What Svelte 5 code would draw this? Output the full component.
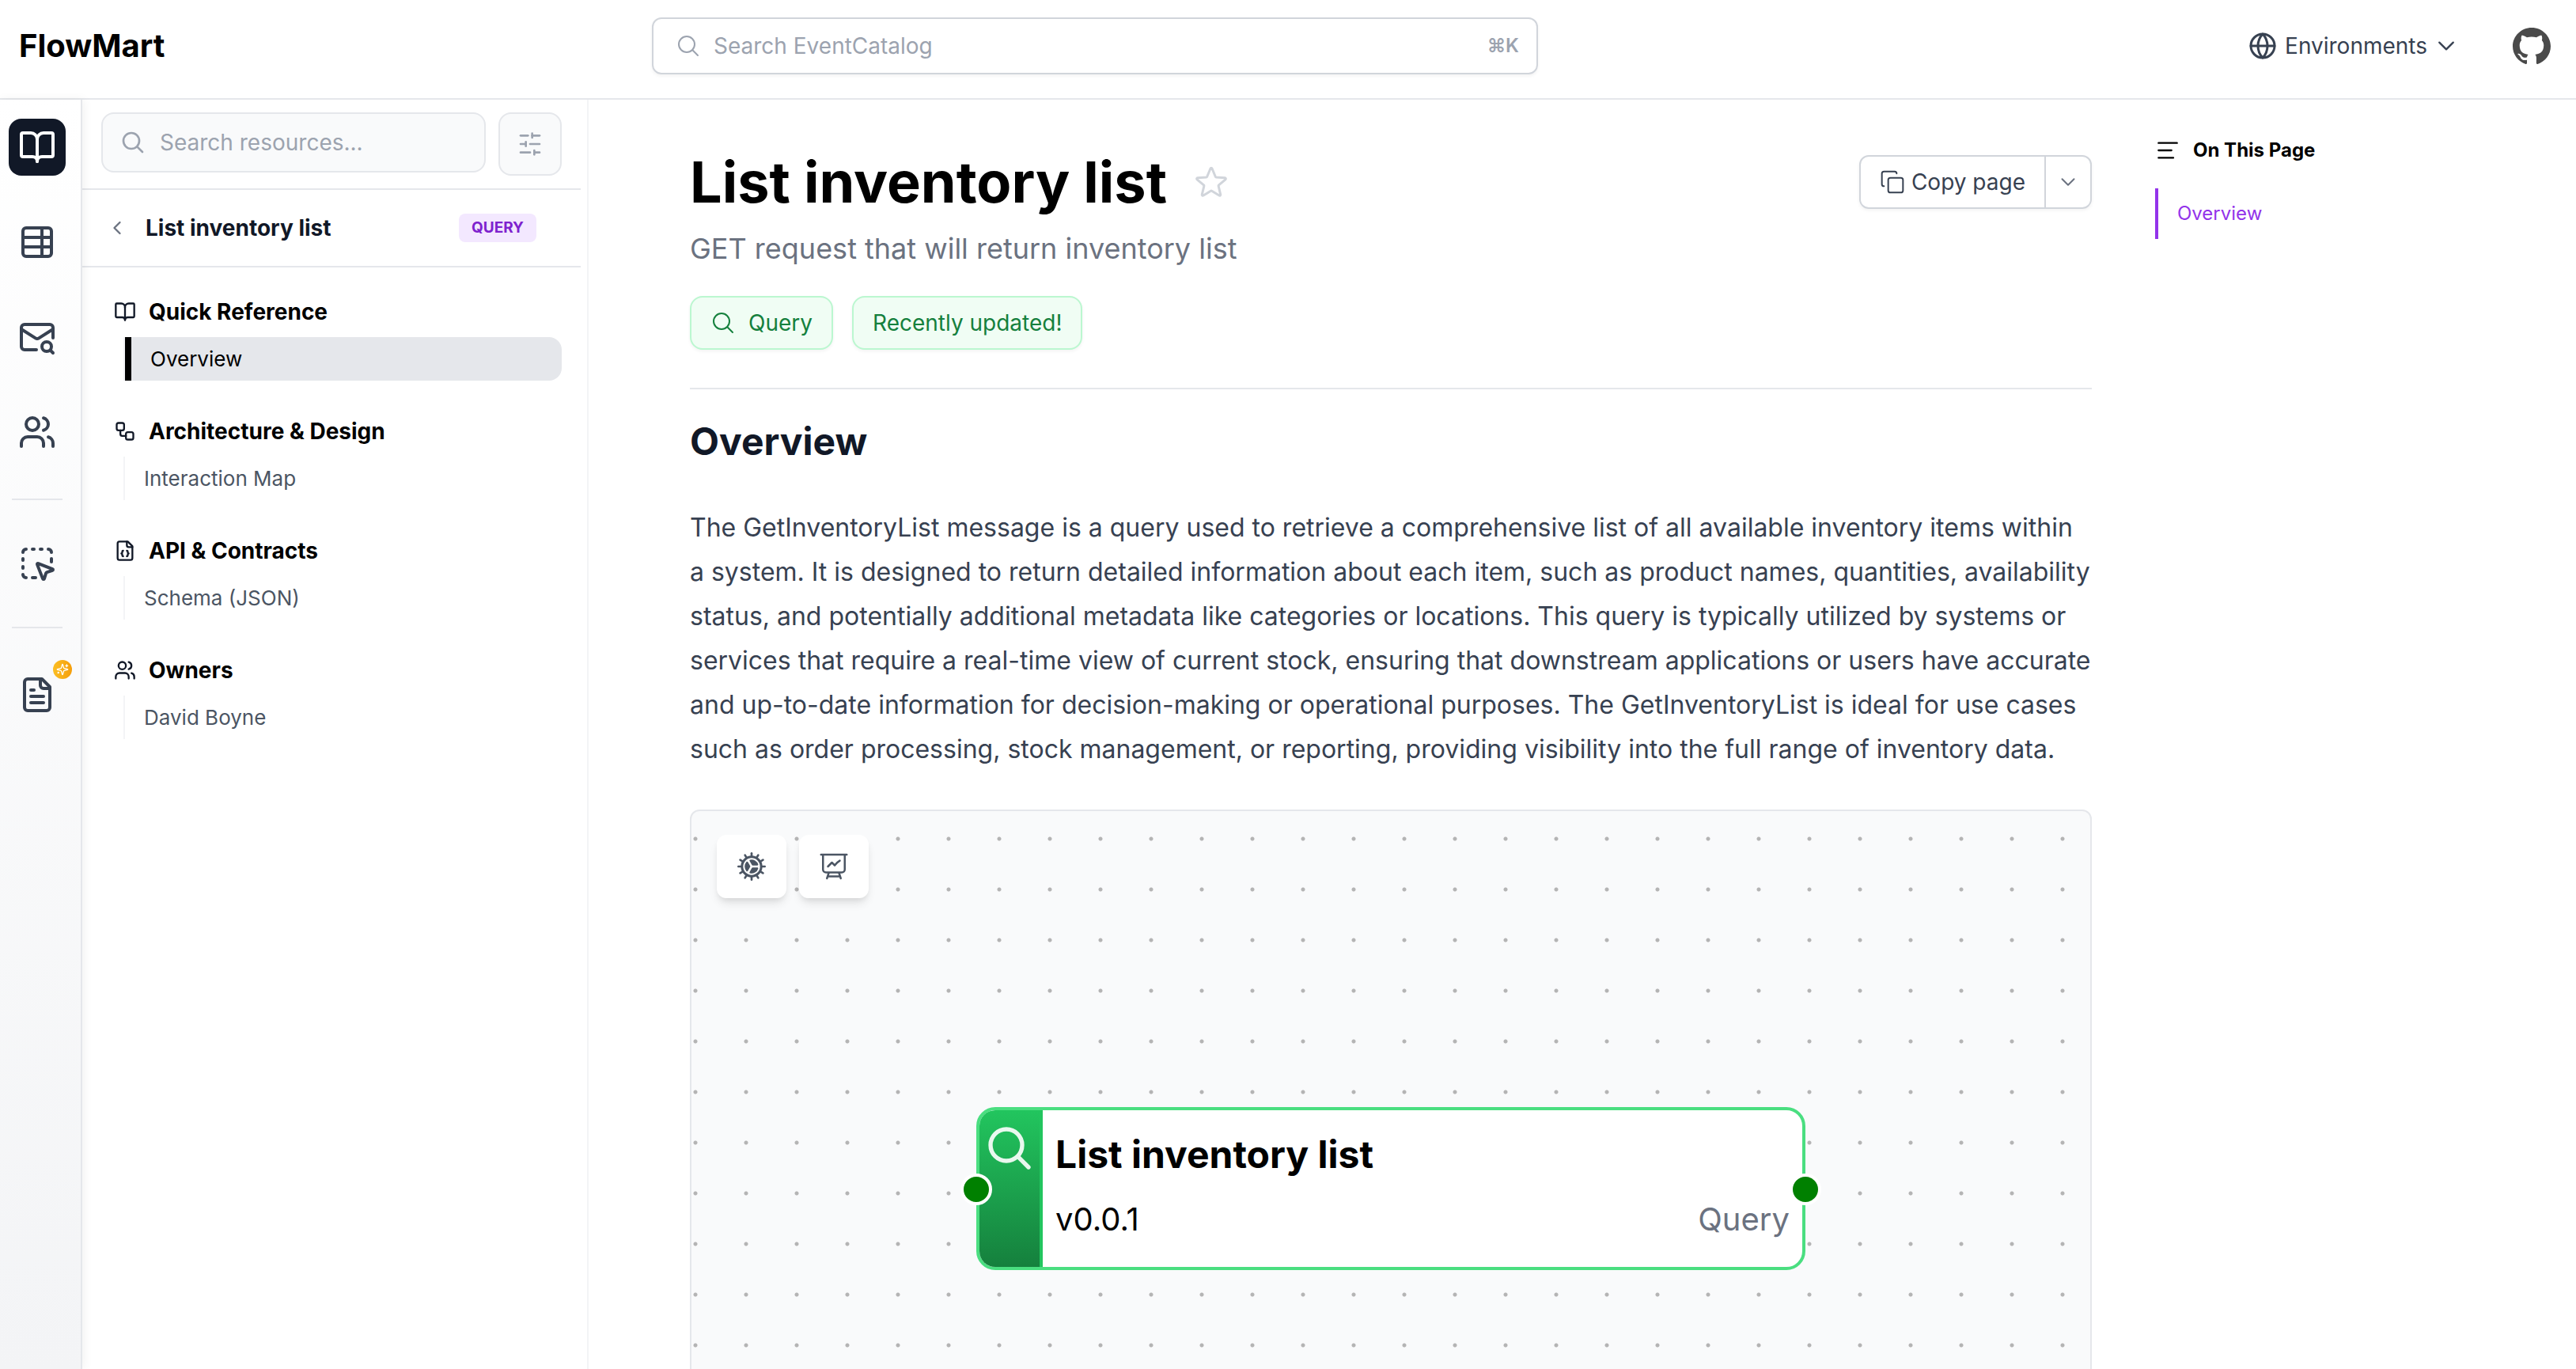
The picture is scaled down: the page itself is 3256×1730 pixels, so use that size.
<script lang="ts">
	type Section = { title: string; icon: string; items: { label: string; active?: boolean }[] };

	// 24x24 stroke icons
	const icons: Record<string, string> = {
		book: '<path d="M12 7v14"/><path d="M3 18a1 1 0 0 1-1-1V4a1 1 0 0 1 1-1h5a4 4 0 0 1 4 4 4 4 0 0 1 4-4h5a1 1 0 0 1 1 1v13a1 1 0 0 1-1 1h-6a3 3 0 0 0-3 3 3 3 0 0 0-3-3z"/>',
		table: '<path d="M15 3v18"/><rect width="18" height="18" x="3" y="3" rx="2"/><path d="M21 9H3"/><path d="M21 15H3"/>',
		mailSearch: '<path d="M22 12.5V6a2 2 0 0 0-2-2H4a2 2 0 0 0-2 2v12c0 1.1.9 2 2 2h7.5"/><path d="m22 7-8.97 5.7a1.94 1.94 0 0 1-2.06 0L2 7"/><path d="M18 21a3 3 0 1 0 0-6 3 3 0 0 0 0 6Z"/><path d="m22 22-1.5-1.5"/>',
		users: '<path d="M16 21v-2a4 4 0 0 0-4-4H6a4 4 0 0 0-4 4v2"/><path d="M16 3.128a4 4 0 0 1 0 7.744"/><path d="M22 21v-2a4 4 0 0 0-3-3.87"/><circle cx="9" cy="7" r="4"/>',
		pointer: '<path d="M12.034 12.681a.498.498 0 0 1 .647-.647l9 3.5a.5.5 0 0 1-.033.943l-3.444 1.068a1 1 0 0 0-.66.66l-1.067 3.443a.5.5 0 0 1-.943.033z"/><path d="M5 3a2 2 0 0 0-2 2"/><path d="M19 3a2 2 0 0 1 2 2"/><path d="M5 21a2 2 0 0 1-2-2"/><path d="M9 3h1"/><path d="M9 21h2"/><path d="M14 3h1"/><path d="M3 9v1"/><path d="M21 9v2"/><path d="M3 14v1"/>',
		fileText: '<path d="M15 2H6a2 2 0 0 0-2 2v16a2 2 0 0 0 2 2h12a2 2 0 0 0 2-2V7Z"/><path d="M14 2v4a2 2 0 0 0 2 2h4"/><path d="M10 9H8"/><path d="M16 13H8"/><path d="M16 17H8"/>',
		sparkles: '<path d="M9.937 15.5A2 2 0 0 0 8.5 14.063l-6.135-1.582a.5.5 0 0 1 0-.962L8.5 9.936A2 2 0 0 0 9.937 8.5l1.582-6.135a.5.5 0 0 1 .963 0L14.063 8.5A2 2 0 0 0 15.5 9.937l6.135 1.581a.5.5 0 0 1 0 .964L15.5 14.063a2 2 0 0 0-1.437 1.437l-1.582 6.135a.5.5 0 0 1-.963 0z"/><path d="M20 3v4"/><path d="M22 5h-4"/><path d="M4 17v2"/><path d="M5 18H3"/>',
		workflow: '<rect width="8" height="8" x="3" y="3" rx="2"/><path d="M7 11v4a2 2 0 0 0 2 2h4"/><rect width="8" height="8" x="13" y="13" rx="2"/>',
		fileCode: '<path d="M15 2H6a2 2 0 0 0-2 2v16a2 2 0 0 0 2 2h12a2 2 0 0 0 2-2V7Z"/><path d="M14 2v4a2 2 0 0 0 2 2h4"/><path d="M10 12a1 1 0 0 0-1 1v1a1 1 0 0 1-1 1 1 1 0 0 1 1 1v1a1 1 0 0 0 1 1"/><path d="M14 18a1 1 0 0 0 1-1v-1a1 1 0 0 1 1-1 1 1 0 0 1-1-1v-1a1 1 0 0 0-1-1"/>',
		search: '<path d="m21 21-5.197-5.197m0 0A7.5 7.5 0 1 0 5.196 5.196a7.5 7.5 0 0 0 10.607 10.607Z"/>',
		sliders: '<path d="M21 4h-7"/><path d="M10 4H3"/><path d="M21 12h-9"/><path d="M8 12H3"/><path d="M21 20h-5"/><path d="M12 20H3"/><path d="M14 2v4"/><path d="M8 10v4"/><path d="M16 18v4"/>',
		left: '<path d="m15 18-6-6 6-6"/>',
		chevron: '<path d="m19.5 8.25-7.5 7.5-7.5-7.5"/>',
		globe: '<circle cx="12" cy="12" r="10"/><path d="M12 2a14.5 14.5 0 0 0 0 20 14.5 14.5 0 0 0 0-20"/><path d="M2 12h20"/>',
		star: '<path d="M11.48 3.499a.562.562 0 0 1 1.04 0l2.125 5.111a.563.563 0 0 0 .475.345l5.518.442c.499.04.701.663.321.988l-4.204 3.602a.563.563 0 0 0-.182.557l1.285 5.385a.562.562 0 0 1-.84.61l-4.725-2.885a.562.562 0 0 0-.586 0L6.982 20.54a.562.562 0 0 1-.84-.61l1.285-5.386a.562.562 0 0 0-.182-.557l-4.204-3.602a.562.562 0 0 1 .321-.988l5.518-.442a.563.563 0 0 0 .475-.345L11.48 3.5Z"/>',
		copy: '<rect width="14" height="14" x="8" y="8" rx="2"/><path d="M4 16c-1.1 0-2-.9-2-2V4c0-1.1.9-2 2-2h10c1.1 0 2 .9 2 2"/>',
		lines: '<path d="M2 4h20M2 12h14M2 20h16"/>',
		presentation: '<path d="M3.75 3v11.25A2.25 2.25 0 0 0 6 16.5h2.25M3.75 3h-1.5m1.5 0h16.5m0 0h1.5m-1.5 0v11.25A2.25 2.25 0 0 1 18 16.5h-2.25m-7.5 0h7.5m-7.5 0-1 3m8.5-3 1 3m0 0 .5 1.5m-.5-1.5h-9.5m0 0-.5 1.5m.75-9 3-3 2.148 2.148A12.061 12.061 0 0 1 16.5 7.605"/>'
	};

	const railGroups = [
		[
			{ icon: 'book', label: 'Documentation', active: true },
			{ icon: 'table', label: 'Explore' },
			{ icon: 'mailSearch', label: 'Messages' },
			{ icon: 'users', label: 'Users' }
		],
		[{ icon: 'pointer', label: 'Studio' }],
		[{ icon: 'fileText', label: 'Custom docs', badge: true }]
	];

	const sections: Section[] = [
		{ title: 'Quick Reference', icon: 'book', items: [{ label: 'Overview', active: true }] },
		{ title: 'Architecture & Design', icon: 'workflow', items: [{ label: 'Interaction Map' }] },
		{ title: 'API & Contracts', icon: 'fileCode', items: [{ label: 'Schema (JSON)' }] },
		{ title: 'Owners', icon: 'users', items: [{ label: 'David Boyne' }] }
	];

	const cogTeeth = Array.from({ length: 12 }, (_, i) => i * 30);

	let resourceQuery = $state('');
	let starred = $state(false);
</script>

{#snippet icon(name: string, size: number, stroke = 2)}
	<svg
		width={size}
		height={size}
		viewBox="0 0 24 24"
		fill="none"
		stroke="currentColor"
		stroke-width={stroke}
		stroke-linecap="round"
		stroke-linejoin="round"
		aria-hidden="true"
	>
		{@html icons[name]}
	</svg>
{/snippet}

<div class="app">
	<header class="topbar">
		<a class="brand" href="/">FlowMart</a>
		<button class="global-search" type="button">
			{@render icon('search', 32, 1.5)}
			<span>Search EventCatalog</span>
			<kbd>⌘K</kbd>
		</button>
		<div class="topbar-right">
			<button class="environments" type="button">
				{@render icon('globe', 36)}
				<span>Environments</span>
				{@render icon('chevron', 28, 2)}
			</button>
			<a class="github" href="/github" aria-label="GitHub">
				<svg width="48" height="48" viewBox="0 0 24 24" fill="currentColor" aria-hidden="true">
					<path d="M12 .5C5.37.5 0 5.78 0 12.292c0 5.211 3.438 9.63 8.205 11.188.6.111.82-.254.82-.567 0-.28-.01-1.022-.015-2.005-3.338.711-4.042-1.582-4.042-1.582-.546-1.361-1.335-1.725-1.335-1.725-1.087-.731.084-.716.084-.716 1.205.082 1.838 1.215 1.838 1.215 1.07 1.803 2.809 1.282 3.495.981.108-.763.417-1.282.76-1.577-2.665-.295-5.466-1.309-5.466-5.827 0-1.287.465-2.339 1.235-3.164-.135-.298-.54-1.497.105-3.121 0 0 1.005-.316 3.3 1.209.96-.262 1.98-.392 3-.398 1.02.006 2.04.136 3 .398 2.28-1.525 3.285-1.209 3.285-1.209.645 1.624.24 2.823.12 3.121.765.825 1.23 1.877 1.23 3.164 0 4.53-2.805 5.527-5.475 5.817.42.354.81 1.077.81 2.182 0 1.578-.015 2.846-.015 3.229 0 .309.21.678.825.56C20.565 21.917 24 17.495 24 12.292 24 5.78 18.627.5 12 .5z" />
				</svg>
			</a>
		</div>
	</header>

	<div class="body">
		<nav class="rail" aria-label="Main">
			{#each railGroups as group, i}
				{#if i > 0}<hr />{/if}
				<div class="rail-group">
					{#each group as item}
						<a class="rail-link" class:active={item.active} href="/" aria-label={item.label}>
							{@render icon(item.icon, 48)}
							{#if item.badge}
								<span class="rail-badge">{@render icon('sparkles', 16, 2)}</span>
							{/if}
						</a>
					{/each}
				</div>
			{/each}
		</nav>

		<aside class="sidebar">
			<div class="filter">
				<label class="filter-box">
					{@render icon('search', 32, 2)}
					<input type="text" placeholder="Search resources..." aria-label="Search resources" bind:value={resourceQuery} />
				</label>
				<button class="filter-button" type="button" aria-label="Filters">
					{@render icon('sliders', 32)}
				</button>
			</div>

			<div class="resource">
				<button class="back" type="button" aria-label="Back">{@render icon('left', 28)}</button>
				<span class="resource-name">List inventory list</span>
				<span class="resource-type">QUERY</span>
			</div>

			<div class="sections">
				{#each sections as section}
					<section>
						<h3>{@render icon(section.icon, 28)}{section.title}</h3>
						<ul>
							{#each section.items as item}
								<li><a class:active={item.active} href="/">{item.label}</a></li>
							{/each}
						</ul>
					</section>
				{/each}
			</div>
		</aside>

		<main>
			<article>
				<div class="title-row">
					<h1>List inventory list</h1>
					<button class="star" type="button" aria-label="Favourite" aria-pressed={starred} onclick={() => (starred = !starred)}>
						{@render icon('star', 48, 1.5)}
					</button>
					<div class="copy">
						<button class="copy-main" type="button">{@render icon('copy', 32, 1.5)}Copy page</button>
						<button class="copy-more" type="button" aria-label="More options">{@render icon('chevron', 24, 2)}</button>
					</div>
				</div>
				<p class="summary">GET request that will return inventory list</p>
				<div class="badges">
					<span class="badge">{@render icon('search', 32, 1.5)}Query</span>
					<span class="badge">Recently updated!</span>
				</div>

				<div class="prose">
					<h2 id="overview">Overview</h2>
					<p>
						The GetInventoryList message is a query used to retrieve a comprehensive list of all available inventory items
						within a system. It is designed to return detailed information about each item, such as product names,
						quantities, availability status, and potentially additional metadata like categories or locations. This query is
						typically utilized by systems or services that require a real-time view of current stock, ensuring that
						downstream applications or users have accurate and up-to-date information for decision-making or operational
						purposes. The GetInventoryList is ideal for use cases such as order processing, stock management, or reporting,
						providing visibility into the full range of inventory data.
					</p>
				</div>

				<div class="diagram">
					<div class="diagram-tools">
						<button type="button" aria-label="Settings">
							<svg width="40" height="40" viewBox="0 0 24 24" fill="none" stroke="currentColor" stroke-linecap="round" aria-hidden="true">
								<circle cx="12" cy="12" r="7.3" stroke-width="1.8" />
								{#each cogTeeth as angle}
									<path d="M12 4V2" stroke-width="1.6" transform="rotate({angle} 12 12)" />
								{/each}
								<path
									fill="currentColor"
									stroke="none"
									d="M17.004 10.407c.138.435-.216.842-.672.842h-3.465a.75.75 0 0 1-.65-.375l-1.732-3c-.229-.396-.053-.907.393-1.004a5.252 5.252 0 0 1 6.126 3.537ZM8.12 8.464c.307-.338.838-.235 1.066.16l1.732 3a.75.75 0 0 1 0 .75l-1.732 3c-.229.397-.76.5-1.067.161A5.23 5.23 0 0 1 6.75 12a5.23 5.23 0 0 1 1.37-3.536ZM10.878 17.13c-.447-.098-.623-.608-.394-1.004l1.733-3.002a.75.75 0 0 1 .65-.375h3.465c.457 0 .81.407.672.842a5.252 5.252 0 0 1-6.126 3.539Z"
								/>
							</svg>
						</button>
						<button type="button" aria-label="Present">{@render icon('presentation', 40, 1.5)}</button>
					</div>
					<div class="node">
						<div class="node-strip">{@render icon('search', 64, 2)}</div>
						<div class="node-body">
							<strong>List inventory list</strong>
							<div class="node-meta">
								<span>v0.0.1</span>
								<span class="node-type">Query</span>
							</div>
						</div>
						<span class="handle handle-in"></span>
						<span class="handle handle-out"></span>
					</div>
				</div>
			</article>

			<nav class="toc" aria-label="On this page">
				<h3>{@render icon('lines', 28, 2)}On This Page</h3>
				<a href="#overview">Overview</a>
			</nav>
		</main>
	</div>
</div>

<style>
	:global(body) {
		margin: 0;
	}

	.app {
		display: flex;
		flex-direction: column;
		height: 100vh;
		overflow: hidden;
		background: #fff;
		color: #000;
		font-family: Inter, 'Liberation Sans', sans-serif;
		font-size: 28px;
		line-height: 40px;
	}

	.app :global(*) {
		box-sizing: border-box;
	}

	svg {
		display: block;
		flex: none;
	}

	a {
		color: inherit;
		text-decoration: none;
	}

	button {
		margin: 0;
		padding: 0;
		border: 0;
		background: none;
		color: inherit;
		font: inherit;
		cursor: pointer;
	}

	h1,
	h2,
	h3,
	p,
	ul {
		margin: 0;
		padding: 0;
	}

	/* Top bar */
	.topbar {
		display: flex;
		align-items: center;
		flex: none;
		padding: 22px 32px 30px 24px;
		border-bottom: 2px solid #e5e7eb;
	}

	.brand {
		width: 25%;
		font-size: 40px;
		font-weight: 700;
	}

	.global-search {
		display: flex;
		align-items: center;
		gap: 16px;
		width: 35%;
		height: 72px;
		padding: 0 22px 0 28px;
		border: 2px solid #d1d5db;
		border-radius: 12px;
		box-shadow: 0 2px 4px rgba(0, 0, 0, 0.05);
		color: #9ca3af;
	}

	.global-search kbd {
		margin-left: auto;
		font-family: inherit;
		font-size: 24px;
		font-weight: 600;
	}

	.topbar-right {
		display: flex;
		align-items: center;
		gap: 70px;
		margin-left: auto;
	}

	.environments {
		display: flex;
		align-items: center;
		gap: 10px;
		color: #374151;
	}

	.github {
		color: #4a4a4a;
	}

	.body {
		display: flex;
		flex: 1;
		min-height: 0;
	}

	/* Icon rail */
	.rail {
		z-index: 1;
		flex: none;
		width: 104px;
		padding: 24px 11px;
		border-right: 2px solid #e5e7eb;
		background: linear-gradient(#fff, #f3f4f6);
		box-shadow: 2px 0 12px rgba(0, 0, 0, 0.06);
		color: #374151;
	}

	.rail-group {
		display: flex;
		flex-direction: column;
		gap: 48px;
	}

	.rail-link {
		position: relative;
		display: flex;
		align-items: center;
		justify-content: center;
		width: 72px;
		height: 72px;
		border-radius: 16px;
	}

	.rail-link.active {
		background: #111827;
		color: #fff;
	}

	.rail hr {
		width: 64px;
		height: 2px;
		margin: 48px 4px;
		border: 0;
		background: #e5e7eb;
	}

	.rail hr + .rail-group:not(:last-child) {
		margin: -4px 0;
	}

	.rail-badge {
		position: absolute;
		top: -8px;
		right: -8px;
		display: flex;
		align-items: center;
		justify-content: center;
		width: 24px;
		height: 24px;
		border-radius: 50%;
		background: linear-gradient(90deg, #fbbf24, #f59e0b);
		color: #fff;
	}

	/* Sidebar */
	.sidebar {
		flex: none;
		width: 640px;
		padding-right: 8px;
		border-right: 2px solid #f3f4f6;
	}

	.filter {
		display: flex;
		align-items: flex-start;
		gap: 16px;
		padding: 16px 24px;
		border-bottom: 2px solid #e5e7eb;
	}

	.filter-box,
	.filter-button {
		display: flex;
		align-items: center;
		border: 2px solid #e5e7eb;
		border-radius: 16px;
		background: #f9fafb;
		color: #9ca3af;
	}

	.filter-box {
		flex: 1;
		gap: 18px;
		height: 76px;
		padding: 0 22px;
	}

	.filter-box input {
		width: 100%;
		min-width: 0;
		padding: 0;
		border: 0;
		outline: 0;
		background: none;
		color: #111827;
		font: inherit;
	}

	.filter-box input::placeholder {
		color: #9ca3af;
		opacity: 1;
	}

	.filter-button {
		justify-content: center;
		width: 80px;
		height: 80px;
	}

	.resource {
		display: flex;
		align-items: center;
		gap: 22px;
		padding: 28px 56px 28px 30px;
		border-bottom: 2px solid #e5e7eb;
		color: #111827;
	}

	.back {
		color: #6b7280;
	}

	.resource-name {
		flex: 1;
		font-weight: 700;
	}

	.resource-type {
		padding: 2px 16px;
		border-radius: 8px;
		background: #f3e8ff;
		color: #7e22ce;
		font-size: 19px;
		font-weight: 700;
		line-height: 32px;
	}

	.sections {
		display: flex;
		flex-direction: column;
		gap: 44px;
		padding: 36px 24px 36px 40px;
	}

	.sections h3 {
		display: flex;
		align-items: center;
		gap: 16px;
		margin-bottom: 12px;
		font-size: 28px;
		font-weight: 700;
	}

	.sections h3 :global(svg) {
		color: #111827;
	}

	.sections ul {
		margin-left: 12px;
		border-left: 2px solid #f3f4f6;
		list-style: none;
	}

	.sections li a {
		display: block;
		padding: 8px 24px;
		color: #4b5563;
		font-size: 26px;
		line-height: 39px;
	}

	.sections li a.active {
		border-left: 8px solid #000;
		border-radius: 0 16px 16px 0;
		background: #e5e7eb;
		color: #000;
	}

	/* Page */
	main {
		display: flex;
		align-items: flex-start;
		flex: 1;
		min-width: 0;
		padding-left: 128px;
	}

	article {
		flex: 1;
		min-width: 0;
		padding-top: 64px;
	}

	.title-row {
		display: flex;
		align-items: center;
	}

	h1 {
		font-size: 72px;
		font-weight: 700;
		line-height: 80px;
	}

	.star {
		margin-left: 32px;
		color: #d1d5db;
	}

	.copy {
		display: flex;
		height: 68px;
		margin-left: auto;
		border: 2px solid #d1d5db;
		border-radius: 12px;
		box-shadow: 0 2px 4px rgba(0, 0, 0, 0.05);
		color: #374151;
	}

	.copy-main {
		display: flex;
		align-items: center;
		gap: 8px;
		padding: 0 24px;
	}

	.copy-more {
		padding: 0 16px;
		border-left: 2px solid #d1d5db;
		color: #6b7280;
	}

	.summary {
		padding-top: 16px;
		color: #6b7280;
		font-size: 36px;
		line-height: 56px;
	}

	.badges {
		display: flex;
		gap: 24px;
		padding: 32px 0 48px;
		border-bottom: 2px solid #e5e7eb;
	}

	.badge {
		display: flex;
		align-items: center;
		gap: 16px;
		padding: 12px 24px;
		border: 2px solid #bbf7d0;
		border-radius: 16px;
		background: #f0fdf4;
		box-shadow: 0 2px 4px rgba(0, 0, 0, 0.05);
		color: #15803d;
	}

	.prose h2 {
		padding: 34px 0 49px;
		color: #111827;
		font-size: 48px;
		font-weight: 700;
		line-height: 64px;
	}

	.prose p {
		color: #374151;
		font-size: 32px;
		line-height: 56px;
	}

	/* Diagram canvas */
	.diagram {
		position: relative;
		display: flex;
		align-items: center;
		justify-content: center;
		height: 958px;
		margin-top: 48px;
		border: 2px solid #e5e7eb;
		border-radius: 12px;
		background: radial-gradient(circle, #b4b4b4 2px, transparent 3px) -27px 3px / 64px 64px #f9fafb;
	}

	.diagram-tools {
		position: absolute;
		top: 30px;
		left: 32px;
		display: flex;
		gap: 16px;
	}

	.diagram-tools button {
		padding: 20px 24px;
		border-radius: 12px;
		background: #fff;
		box-shadow: 0 8px 12px -2px rgba(0, 0, 0, 0.1), 0 4px 8px -4px rgba(0, 0, 0, 0.1);
		color: #4b5563;
	}

	.node {
		position: relative;
		display: flex;
		width: 1048px;
		height: 206px;
		border: 4px solid #4ade80;
		border-radius: 24px;
		background: #fff;
	}

	.node-strip {
		width: 80px;
		padding: 16px 6px;
		border-right: 4px solid #22c55e;
		border-radius: 20px 0 0 20px;
		background: linear-gradient(#22c55e, #15803d);
		color: rgba(255, 255, 255, 0.9);
	}

	.node-body {
		flex: 1;
		padding: 20px 16px;
		font-size: 40px;
	}

	.node-body strong {
		display: block;
		font-size: 48px;
		line-height: 72px;
	}

	.node-meta {
		display: flex;
		justify-content: space-between;
		line-height: 92px;
	}

	.node-type {
		color: #6b7280;
	}

	.handle {
		position: absolute;
		top: 80px;
		width: 40px;
		height: 40px;
		border: 4px solid #fff;
		border-radius: 50%;
		background: #008000;
	}

	.handle-in {
		left: -24px;
	}

	.handle-out {
		right: -24px;
	}

	/* On this page */
	.toc {
		flex: none;
		width: 532px;
		margin-left: 80px;
		padding-top: 44px;
		font-size: 24px;
	}

	.toc h3 {
		display: flex;
		align-items: center;
		gap: 18px;
		margin-bottom: 28px;
		padding-left: 2px;
		font-size: 24px;
		font-weight: 700;
	}

	.toc a {
		display: block;
		padding: 12px 24px;
		border-left: 4px solid #9333ea;
		color: #9333ea;
	}
</style>
